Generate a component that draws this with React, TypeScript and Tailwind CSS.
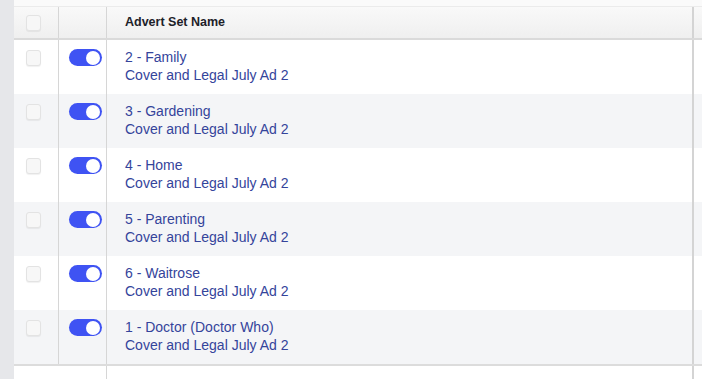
const ROWS = [
  "2 - Family",
  "3 - Gardening",
  "4 - Home",
  "5 - Parenting",
  "6 - Waitrose",
  "1 - Doctor (Doctor Who)",
];

function Checkbox() {
  return (
    <div className="w-[15px] h-[16px] rounded-[3px] border border-[#e3e3e3] bg-[#f7f7f7] shadow-[0_1px_1px_rgba(0,0,0,0.06)]" />
  );
}

function Toggle() {
  return (
    <div className="w-[33px] h-[17px] rounded-full bg-[#3f53f3] flex items-center justify-end pr-[2px]">
      <div className="w-[14px] h-[14px] rounded-full bg-white" />
    </div>
  );
}

export default function App() {
  return (
    <div className="w-[702px] h-[379px] overflow-hidden flex bg-white font-['Liberation_Sans',Arial,sans-serif]">
      {/* left gutter */}
      <div className="w-[14px] shrink-0 bg-[#e6e7ea]" />

      <div className="flex-1 flex flex-col min-w-0">
        <div className="h-[7px] bg-[#fafafa] border-b border-[#ebebeb]" />

        {/* header */}
        <div className="flex h-[33px] bg-gradient-to-b from-[#f9f9f9] to-[#efefef] border-b-2 border-[#dadada]">
          <div className="w-[45px] shrink-0 border-r border-[#d6d6d6] flex items-center pl-[12px]">
            <Checkbox />
          </div>
          <div className="w-[48px] shrink-0 border-r border-[#d6d6d6]" />
          <div className="w-[587px] shrink-0 border-r-2 border-[#d4d4d4] flex items-center pl-[18px] text-[12.5px] font-bold text-[#1d2129]">
            Advert Set Name
          </div>
          <div className="flex-1" />
        </div>

        {/* rows */}
        {ROWS.map((name, i) => (
          <div
            key={name}
            className={`flex h-[54px] ${i % 2 === 1 ? "bg-[#f4f5f7]" : "bg-white"}`}
          >
            <div className="w-[45px] shrink-0 border-r border-[#d6d6d6] pt-[10px] pl-[12px]">
              <Checkbox />
            </div>
            <div className="w-[48px] shrink-0 border-r border-[#d6d6d6] pt-[9px] pl-[10px]">
              <Toggle />
            </div>
            <div className="w-[587px] shrink-0 border-r-2 border-[#d4d4d4] pl-[18px] pt-[8px] text-[14px] leading-[18px] text-[#34449b]">
              <div>{name}</div>
              <div>Cover and Legal July Ad 2</div>
            </div>
            <div className="flex-1" />
          </div>
        ))}

        <div className="h-[2px] bg-[#dcdcdc]" />

        <div className="flex flex-1">
          <div className="w-[45px] shrink-0" />
          <div className="w-[48px] shrink-0 border-r border-[#d6d6d6]" />
          <div className="w-[587px] shrink-0 border-r-2 border-[#d4d4d4]" />
          <div className="flex-1" />
        </div>
      </div>
    </div>
  );
}
